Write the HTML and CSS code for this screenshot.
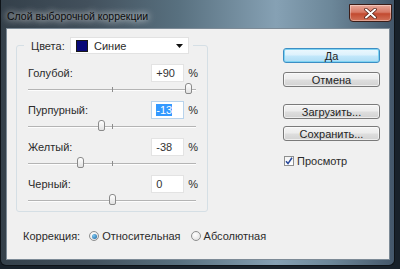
FILE: index.html
```html
<!DOCTYPE html>
<html lang="ru">
<head>
    <meta charset="UTF-8">
    <title>Слой выборочной коррекции</title>
    <link rel="stylesheet" href="styles.css">
</head>
<body>
    <div class="window">
        <div class="titlebar">
            <span class="title">Слой выборочной коррекции</span>
            <button class="close-btn" aria-label="Закрыть">
                <svg width="13" height="11" viewBox="0 0 13 11">
                    <path d="M2 1.5 L11 9.5 M11 1.5 L2 9.5" stroke="#4a1a10" stroke-width="3.4" stroke-linecap="round"/>
                    <path d="M2 1.5 L11 9.5 M11 1.5 L2 9.5" stroke="#fff" stroke-width="2" stroke-linecap="round"/>
                </svg>
            </button>
        </div>

        <div class="client">
            <div class="main">
                <fieldset class="group">
                    <legend class="group-head">
                        <span class="head-label">Цвета:</span>
                        <div class="combo">
                            <span class="swatch"></span>
                            <span class="combo-text">Синие</span>
                            <svg class="combo-arrow" width="7" height="4" viewBox="0 0 7 4">
                                <path d="M0 0 H7 L3.5 4 Z" fill="#111"/>
                            </svg>
                        </div>
                    </legend>

                    <div class="rows">
                        <div class="row">
                            <div class="row-top">
                                <span class="label">Голубой:</span>
                                <span class="field">+90</span>
                                <span class="pct">%</span>
                            </div>
                            <div class="slider">
                                <div class="track"></div>
                                <span class="tick"></span>
                                <span class="thumb" style="left: 95%"></span>
                            </div>
                        </div>
                        <div class="row">
                            <div class="row-top">
                                <span class="label">Пурпурный:</span>
                                <span class="field focused"><span class="selected">-13</span></span>
                                <span class="pct">%</span>
                            </div>
                            <div class="slider">
                                <div class="track"></div>
                                <span class="tick"></span>
                                <span class="thumb" style="left: 43.5%"></span>
                            </div>
                        </div>
                        <div class="row">
                            <div class="row-top">
                                <span class="label">Желтый:</span>
                                <span class="field">-38</span>
                                <span class="pct">%</span>
                            </div>
                            <div class="slider">
                                <div class="track"></div>
                                <span class="tick"></span>
                                <span class="thumb" style="left: 31%"></span>
                            </div>
                        </div>
                        <div class="row">
                            <div class="row-top">
                                <span class="label">Черный:</span>
                                <span class="field">0</span>
                                <span class="pct">%</span>
                            </div>
                            <div class="slider">
                                <div class="track"></div>
                                <span class="tick"></span>
                                <span class="thumb" style="left: 50%"></span>
                            </div>
                        </div>
                    </div>
                </fieldset>

                <div class="side">
                    <button class="btn default">Да</button>
                    <button class="btn btn-cancel">Отмена</button>
                    <button class="btn btn-load">Загрузить...</button>
                    <button class="btn btn-save">Сохранить...</button>
                    <label class="check">
                        <span class="check-box">
                            <svg width="8" height="8" viewBox="0 0 8 8">
                                <path d="M1 4.2 L3 6.6 L7 0.8" fill="none" stroke="#27489a" stroke-width="1.5"/>
                            </svg>
                        </span>
                        <span>Просмотр</span>
                    </label>
                </div>
            </div>

            <div class="mode">
                <span class="mode-label">Коррекция:</span>
                <label class="radio">
                    <span class="radio-dot checked"></span>
                    <span>Относительная</span>
                </label>
                <label class="radio">
                    <span class="radio-dot"></span>
                    <span>Абсолютная</span>
                </label>
            </div>
        </div>
    </div>
</body>
</html>
```

FILE: styles.css
```css
* {
    margin: 0;
    padding: 0;
    box-sizing: border-box;
}

body {
    width: 400px;
    height: 269px;
    overflow: hidden;
    background: #18212a;
    font-family: "Liberation Sans", Arial, sans-serif;
    font-size: 11px;
    color: #2b2b2b;
}

.window {
    width: 395px;
    height: 266px;
    padding: 0 4px 5px 5px;
    border: 1px solid #0e1318;
    border-top: none;
    border-radius: 0 0 6px 6px;
    background: linear-gradient(90deg, #34404a 0%, #42505c 22%, #58707f 45%, #86a1b4 70%, #6c8799 84%, #44576a 100%);
}

.titlebar {
    height: 28px;
    display: flex;
    align-items: flex-start;
    justify-content: space-between;
}

.title {
    margin-top: 10px;
    padding-left: 1px;
    font-size: 10.5px;
    color: #0c0c0c;
    text-shadow: 0 0 6px rgba(255, 255, 255, 0.9), 0 0 10px rgba(255, 255, 255, 0.6);
}

.close-btn {
    width: 43px;
    height: 18px;
    margin-top: 4px;
    margin-right: -2px;
    border: 1px solid #3b1d18;
    border-radius: 0 0 4px 4px;
    background: linear-gradient(#e9a899 0%, #d77a66 45%, #c24a30 55%, #d2735a 100%);
    box-shadow: inset 0 0 0 1px rgba(255, 255, 255, 0.35);
    display: flex;
    align-items: center;
    justify-content: center;
}

.client {
    height: 232px;
    background: #f0f0f0;
    border: 1px solid #7c8a96;
}

.main {
    display: flex;
    padding: 8px 0 0 9px;
}

.group {
    width: 192px;
    height: 175px;
    padding: 0 9px 0 11px;
    border: 1px solid #d5dfe5;
    border-radius: 3px;
}

.group-head {
    display: flex;
    align-items: center;
    margin-left: -4px;
    padding: 0 4px 0 7px;
}

.head-label {
    width: 39px;
}

.combo {
    width: 119px;
    height: 17px;
    display: flex;
    align-items: center;
    padding: 0 5px 0 5px;
    background: #fff;
    border: 1px solid #e2e2e2;
}

.swatch {
    width: 12px;
    height: 12px;
    background: #0a0a78;
    border: 1px solid #1a1a1a;
}

.combo-text {
    flex: 1;
    margin-left: 6px;
}

.rows {
    margin-top: 10px;
}

.row-top {
    height: 18px;
    display: flex;
    align-items: center;
}

.label {
    flex: 1;
}

.field {
    width: 33px;
    height: 18px;
    padding-left: 4px;
    line-height: 16px;
    background: #fff;
    border: 1px solid #e3e3e3;
    color: #333;
}

.field.focused {
    border-color: #b8d3ec;
}

.selected {
    display: inline-block;
    line-height: 12px;
    background: #3399ff;
    color: #fff;
}

.pct {
    margin-left: 4px;
}

.slider {
    position: relative;
    height: 19px;
    margin-right: 2px;
}

.row:last-child .slider {
    height: 17px;
}

.track {
    position: relative;
    top: 7px;
    height: 2px;
    border-top: 1px solid #b4b4b4;
    border-bottom: 1px solid #fdfdfd;
}

.tick {
    position: absolute;
    left: 50%;
    top: 5px;
    width: 1px;
    height: 5px;
    background: #8c8c8c;
}

.thumb {
    position: absolute;
    top: 1px;
    width: 7px;
    height: 11px;
    margin-left: -3px;
    border: 1px solid #8a8a8a;
    border-radius: 3px 3px 2px 2px;
    background: linear-gradient(#ffffff, #e2e2e2);
}

.side {
    width: 97px;
    margin-left: 75px;
    padding-top: 11px;
    display: flex;
    flex-direction: column;
}

.btn {
    height: 15px;
    font-family: inherit;
    font-size: 11px;
    color: #1f1f1f;
    border: 1px solid #7a7a7a;
    border-radius: 3px;
    background: linear-gradient(#f4f4f4 0%, #ececec 48%, #dedede 52%, #d2d2d2 100%);
    box-shadow: inset 0 0 0 1px rgba(255, 255, 255, 0.6);
}

.btn.default {
    border-color: #3c8ec4;
    background: linear-gradient(#ecf8fe 0%, #dcf1fc 48%, #c3e8fb 52%, #aedcf4 100%);
    box-shadow: inset 0 0 0 1px #7fd3f2;
}

.btn-cancel {
    margin-top: 9px;
}

.btn-load {
    margin-top: 17px;
}

.btn-save {
    margin-top: 7px;
}

.check {
    display: flex;
    align-items: center;
    margin-top: 14px;
    margin-left: 1px;
}

.check-box {
    width: 10px;
    height: 10px;
    margin-right: 3px;
    display: flex;
    align-items: center;
    justify-content: center;
    background: linear-gradient(#f3f3f3, #ffffff);
    border: 1px solid #8e8f8f;
}

.mode {
    display: flex;
    align-items: center;
    height: 14px;
    margin-top: 17px;
    padding-left: 16px;
}

.mode-label {
    margin-right: 9px;
}

.radio {
    display: flex;
    align-items: center;
    margin-right: 10px;
}

.radio-dot {
    width: 10px;
    height: 10px;
    margin-right: 3px;
    border: 1px solid #8e8f8f;
    border-radius: 50%;
    background: radial-gradient(circle at 40% 35%, #ffffff, #dcdcdc);
    display: flex;
    align-items: center;
    justify-content: center;
}

.radio-dot.checked::after {
    content: "";
    width: 5px;
    height: 5px;
    border-radius: 50%;
    background: radial-gradient(circle at 35% 35%, #7ec8f0, #155e9e);
}
```
